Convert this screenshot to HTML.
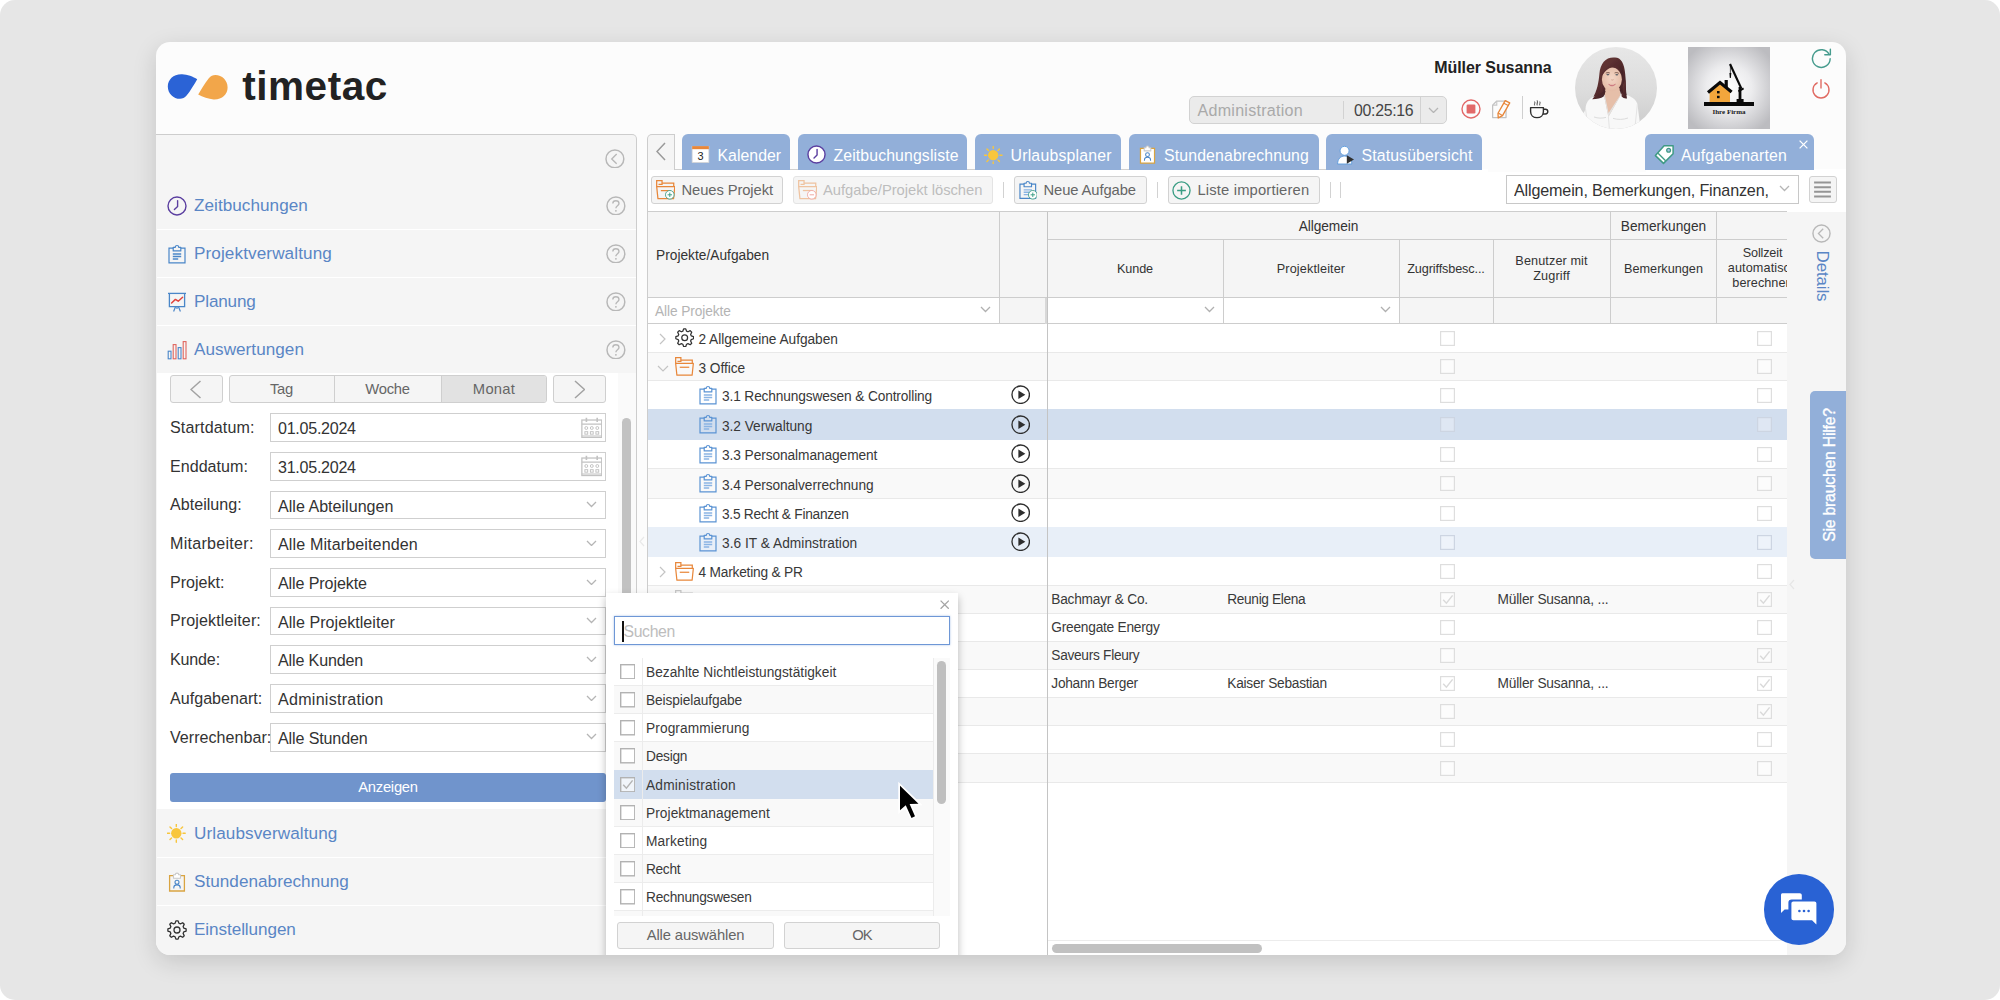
<!DOCTYPE html>
<html lang="de"><head><meta charset="utf-8"><title>TimeTac</title>
<style>
html,body{margin:0;padding:0}
html{background:#fff}
body{width:2000px;height:1000px;overflow:hidden;background:#e6e6e6;border-radius:15px;font-family:"Liberation Sans",sans-serif;position:relative}
#card{position:absolute;left:156px;top:42px;width:1690px;height:913px;border-radius:14px;overflow:hidden;background:#fcfcfc;box-shadow:0 7px 24px rgba(0,0,0,.14)}
#pg{position:absolute;left:-156px;top:-42px;width:2000px;height:1000px}
#pg div,#pg svg{position:absolute;box-sizing:border-box}
.t{white-space:nowrap}
.clip{overflow:hidden}

</style></head>
<body>
<div id="card"><div id="pg">
<svg style="left:164px;top:70px;" width="70" height="34" viewBox="0 0 70 34" fill="none"><path d="M18.2 4.2C23 4.4 29.5 6.6 33.2 9.2C30.4 14 26.6 20.6 22.6 25.6C20.6 28 18.6 28.8 16 28.8C9.4 28.8 3.8 23.4 3.8 16.4C3.8 9.4 9.6 3.8 18.2 4.2Z" fill="#2b63d6"/><path d="M49.6 29.4C44.8 29.2 38.4 27 34.2 24.6C37 19.8 40.8 13.2 44.8 8.2C46.8 5.8 48.8 5 51.4 5C58 5 63.6 10.4 63.6 17.4C63.6 24.4 57.8 29.8 49.6 29.4Z" fill="#f2a64a"/></svg>
<div class="t" style="left:242.2px;top:61.2px;height:50px;line-height:50px;font-size:40.5px;font-weight:700;letter-spacing:0.55px;color:#222">timetac</div>
<div class="t" style="left:1551.5px;top:56.5px;line-height:21px;height:21px;color:#222;white-space:nowrap;font-size:15.98px;font-weight:700;letter-spacing:-0.057px;transform:translateX(-100%);">Müller Susanna</div>
<div style="left:1189px;top:96px;width:258px;height:28px;background:#ebebeb;border:1px solid #d2d2d2;border-radius:5px"></div>
<div style="left:1343px;top:101px;width:1px;height:18px;background:#d2d2d2"></div>
<div style="left:1420px;top:97px;width:1px;height:26px;background:#d2d2d2"></div>
<div class="t" style="left:1197.5px;top:100.4px;line-height:21px;height:21px;color:#a9a9a9;white-space:nowrap;font-size:16.09px;font-weight:400;letter-spacing:0.25px;">Administration</div>
<div class="t" style="left:1354px;top:100.0px;line-height:21px;height:21px;color:#444;white-space:nowrap;font-size:15.82px;font-weight:400;letter-spacing:-0.277px;">00:25:16</div>
<svg style="left:1428.0px;top:106.75px;" width="11" height="6.5" viewBox="0 0 11 6.5" fill="none"><path d="M1 1L5.5 5.5L10 1" stroke="#b5b5b5" stroke-width="1.3"/></svg>
<svg style="left:1460.5px;top:99.0px;" width="20" height="20" viewBox="0 0 20 20" fill="none"><circle cx="10" cy="10" r="9" stroke="#e26969" stroke-width="1.4"/><rect x="5.6" y="5.6" width="8.8" height="8.8" rx="1.2" fill="#e26969"/></svg>
<svg style="left:1490.7px;top:98.5px;" width="20.6" height="20.6" viewBox="0 0 20 20" fill="none"><path d="M5.6 2H14.6V18H1.6V6Z" stroke="#c2c2c2" stroke-width="1.2" stroke-linejoin="round"/><path d="M5.6 2V6H1.6" stroke="#c8c8c8" stroke-width="1.1"/><path d="M13.8 1.6L18.2 3.8L11.2 16.2L7 18.4L6.8 13.8Z" stroke="#e8873a" stroke-width="1.3" stroke-linejoin="round" fill="#fcfcfc"/><path d="M12.4 4.2L16.8 6.4M7 13.6L11 16" stroke="#e8873a" stroke-width="1.1"/></svg>
<div style="left:1522px;top:96px;width:1px;height:23px;background:#cfcfcf"></div>
<svg style="left:1528.5px;top:99.0px;" width="20" height="20" viewBox="0 0 20 20" fill="none"><path d="M1.6 8.6H14.4V12.4C14.4 16.2 11.8 18.6 8 18.6C4.2 18.6 1.6 16.2 1.6 12.4Z" stroke="#2e2e2e" stroke-width="1.4" stroke-linejoin="round"/><path d="M14.4 10.2H16.4C19.6 10.2 19.6 15 16.4 15H13.8" stroke="#2e2e2e" stroke-width="1.4"/><path d="M5.6 6.4C5 5 6.4 4.2 5.6 2.6M8.2 6.4C7.6 4.6 9 3.4 8.2 1.4M10.8 6.4C10.2 5 11.6 4.2 10.8 2.6" stroke="#2e2e2e" stroke-width="0.9"/></svg>
<svg style="left:1575px;top:47px;" width="82" height="82" viewBox="0 0 82 82" fill="none"><defs><clipPath id="avc"><circle cx="41" cy="41" r="41"/></clipPath><linearGradient id="avg" x1="0" y1="0" x2="0" y2="1"><stop offset="0" stop-color="#e7e7e7"/><stop offset="0.55" stop-color="#dcdcdc"/><stop offset="1" stop-color="#cbcbcb"/></linearGradient><radialGradient id="avf" cx="0.5" cy="0.45" r="0.6"><stop offset="0" stop-color="#f3d6c6"/><stop offset="1" stop-color="#e3b9a3"/></radialGradient><linearGradient id="avh" x1="0" y1="0" x2="1" y2="1"><stop offset="0" stop-color="#6b3b38"/><stop offset="0.5" stop-color="#552b2d"/><stop offset="1" stop-color="#3f2025"/></linearGradient><filter id="avb" x="-5%" y="-5%" width="110%" height="110%"><feGaussianBlur stdDeviation="0.45"/></filter></defs><g clip-path="url(#avc)"><rect width="82" height="82" fill="url(#avg)"/><g filter="url(#avb)"><path d="M40 10.6C31 9.8 25.4 16 24.4 27C23.6 35 22.6 43 17.2 52.2C22 52.2 26 51.4 28.6 49.6L33 44H45L46.6 49.6C48 51 50 51.8 52 51.4C50.4 44 51.4 36 50.2 27C49.4 16.6 46 10.6 40 10.6Z" fill="url(#avh)"/><path d="M30.5 41L29 52L33.4 70L45.5 50L44.5 41Z" fill="#e6bfa9"/><path d="M-2 92L10.5 62C11 54 15 50.5 22 48.5L28.6 46.4L33.4 70L46.6 46.6C53 48.4 60.4 50.4 62.4 57L67 92Z" fill="#f8f8f8"/><path d="M28.6 46.4L33.4 70L46.6 46.6L44.4 49.4L33.6 66L30 49Z" fill="#e2e2e2"/><path d="M33.4 70L34.4 82" stroke="#dedede" stroke-width="0.8"/><path d="M19 70C23 71.4 27 71.4 31 70.4M38 71.4C43 72.8 48 72.8 53 71" stroke="#dcdcdc" stroke-width="1" fill="none"/><path d="M10.5 62L13 80M62.4 57L60 80" stroke="#e4e4e4" stroke-width="1" fill="none"/><path d="M24.8 33C24.2 41 22.6 46 17.2 52.2C22 52.2 26 51.4 28.6 49.6L30.6 44.6L27.4 40Z" fill="url(#avh)"/><path d="M46.4 41L46.6 49.6C48 51 50 51.8 52 51.4C50.6 45 51 40 50.4 33Z" fill="url(#avh)"/><ellipse cx="36.9" cy="32.4" rx="10" ry="11.8" fill="url(#avf)"/><path d="M40.5 11.4C33 11.6 27.6 17.6 26.2 31C28.4 25 33 20.6 41.6 18.8C45 20.8 46.6 25 47.2 31.6C49.4 24 48 13.6 40.5 11.4Z" fill="url(#avh)"/><path d="M26.4 29C25.4 35 26.4 42 24 47L28.4 44.6C27 40 26.4 34 26.4 29ZM47.2 30C48 36 47 42 48.6 47.4L45.6 43C46.8 39 47.2 34 47.2 30Z" fill="url(#avh)"/><path d="M30.8 26.2C32 25.4 33.6 25.4 34.8 26M39.6 26C40.8 25.4 42.6 25.4 43.8 26.4" stroke="#6b4a40" stroke-width="0.9" fill="none"/><ellipse cx="32.9" cy="27.6" rx="1.5" ry="0.8" fill="#5c5f66"/><ellipse cx="41.8" cy="27.7" rx="1.5" ry="0.8" fill="#5c5f66"/><path d="M36.2 32.6C36.8 33.2 37.8 33.2 38.6 32.6" stroke="#c99a86" stroke-width="0.8" fill="none"/><path d="M33.6 37.2C35.6 38.6 38.6 38.6 40.6 37C38.6 39.6 35.4 39.6 33.6 37.2Z" fill="#c8707a" stroke="#c8707a" stroke-width="0.5"/></g></g></svg>
<svg style="left:1688px;top:47px;" width="82" height="82" viewBox="0 0 82 82" fill="none"><defs><radialGradient id="lgg" cx="0.5" cy="0.5" r="0.62"><stop offset="0" stop-color="#ffffff"/><stop offset="0.45" stop-color="#ececee"/><stop offset="1" stop-color="#bcbcc0"/></radialGradient></defs><rect width="82" height="82" fill="url(#lgg)"/><rect x="16" y="55" width="50" height="4" fill="#0a0a0a"/><path d="M21.6 55V44.6L32 37L42 44.6V55Z" fill="#f2a63c"/><path d="M20 45.4L32 35.6L43.6 45" stroke="#0a0a0a" stroke-width="3.2" fill="none"/><rect x="36.6" y="33" width="3.2" height="8" fill="#0a0a0a"/><rect x="29" y="44" width="2.6" height="2.4" fill="#0a0a0a"/><rect x="29" y="48.8" width="2.6" height="2.4" fill="#0a0a0a"/><path d="M42 17L53.4 41.6" stroke="#0a0a0a" stroke-width="2.2"/><rect x="50.6" y="40" width="2.8" height="15" fill="#0a0a0a"/><rect x="48.6" y="52" width="7" height="3.4" fill="#0a0a0a"/><path d="M50.4 44.4L55.6 41.4" stroke="#0a0a0a" stroke-width="1.8"/><path d="M42.4 18V26" stroke="#0a0a0a" stroke-width="0.7"/><path d="M41.4 26H43.4L42.8 31L41.8 31Z" fill="#0a0a0a"/><text x="41" y="66.6" text-anchor="middle" font-family="Liberation Serif, serif" font-weight="700" font-size="7" fill="#1a1a1a">Ihre Firma</text></svg>
<svg style="left:1811.0px;top:48.2px;" width="20.6" height="20.6" viewBox="0 0 20 20" fill="none"><path d="M17.6 6.2A8.6 8.6 0 1 0 18.6 10.4" stroke="#479c8e" stroke-width="1.4" stroke-linecap="round"/><path d="M18.8 1.2V6.6H13.4" stroke="#479c8e" stroke-width="1.4" stroke-linecap="round" stroke-linejoin="round"/></svg>
<svg style="left:1810.3px;top:77.5px;" width="22" height="22" viewBox="0 0 22 22" fill="none"><path d="M7.2 4.9A8 8 0 1 0 14.8 4.9" stroke="#e06a62" stroke-width="1.4" stroke-linecap="round"/><path d="M11 1.8V10" stroke="#e06a62" stroke-width="1.4" stroke-linecap="round"/></svg>
<div style="left:156px;top:134px;width:481px;height:830px;background:#f5f5f5;border:1px solid #cdcdcd;border-left:none;border-radius:0 5px 0 0"></div>
<svg style="left:604.8px;top:148.5px;" width="19.8" height="19.8" viewBox="0 0 20 20" fill="none"><circle cx="10" cy="10" r="9" stroke="#b8b8b8" stroke-width="1.5"/><path d="M11.8 5L6.8 10L11.8 15" stroke="#b8b8b8" stroke-width="1.4"/></svg>
<svg style="left:166.6px;top:195.5px;" width="20" height="20" viewBox="0 0 20 20" fill="none"><circle cx="10" cy="10" r="9" stroke="#5b3fa0" stroke-width="1.4" fill="none"/><path d="M10.6 4.6V10.6L7.4 13.6" stroke="#5b3fa0" stroke-width="1.4" stroke-linecap="round" stroke-linejoin="round"/></svg>
<div class="t" style="left:194px;top:193.5px;line-height:23px;height:23px;color:#5a86c5;white-space:nowrap;font-size:17.14px;font-weight:400;letter-spacing:0.04px;">Zeitbuchungen</div>
<svg style="left:606.3px;top:195.5px;" width="19.8" height="19.8" viewBox="0 0 20 20" fill="none"><circle cx="10" cy="10" r="9" stroke="#b8b8b8" stroke-width="1.5"/><path d="M6.9 7.6C6.9 5.8 8.3 4.8 10 4.8C11.8 4.8 13.1 5.9 13.1 7.5C13.1 9.8 10 9.8 10 12.4" stroke="#b8b8b8" stroke-width="1.4"/><circle cx="10" cy="15" r="0.95" fill="#b8b8b8"/></svg>
<svg style="left:166.6px;top:243.5px;" width="20" height="20" viewBox="0 0 20 20" fill="none"><path d="M6.2 4.2H2V18.8H18V4.2H13.8" stroke="#4a86c8" stroke-width="1.2" fill="none"/><path d="M6.2 6.9V3.3H8.3C8.3 0.9 11.7 0.9 11.7 3.3H13.8V6.9Z" stroke="#4a86c8" stroke-width="1.2" fill="none" stroke-linejoin="round"/><path d="M5.8 10H14.2M5.8 12.5H14.2M5.8 15H11.2" stroke="#4a86c8" stroke-width="1.3"/></svg>
<div class="t" style="left:194px;top:241.5px;line-height:23px;height:23px;color:#5a86c5;white-space:nowrap;font-size:17.14px;font-weight:400;letter-spacing:0.105px;">Projektverwaltung</div>
<svg style="left:606.3px;top:243.5px;" width="19.8" height="19.8" viewBox="0 0 20 20" fill="none"><circle cx="10" cy="10" r="9" stroke="#b8b8b8" stroke-width="1.5"/><path d="M6.9 7.6C6.9 5.8 8.3 4.8 10 4.8C11.8 4.8 13.1 5.9 13.1 7.5C13.1 9.8 10 9.8 10 12.4" stroke="#b8b8b8" stroke-width="1.4"/><circle cx="10" cy="15" r="0.95" fill="#b8b8b8"/></svg>
<svg style="left:166.6px;top:291.5px;" width="20" height="20" viewBox="0 0 20 20" fill="none"><path d="M1 1.4H19" stroke="#4a86c8" stroke-width="1.3"/><path d="M2.4 1.4V14.6H17.6V1.4" stroke="#4a86c8" stroke-width="1.3"/><path d="M8.6 14.6L6.6 19.4M11.4 14.6L13.4 19.4M10 14.6V17" stroke="#4a86c8" stroke-width="1.2"/><path d="M4.6 11L8.4 7.4L11.2 9.2L15.6 5.2" stroke="#e0453e" stroke-width="1.5" stroke-linejoin="round" stroke-linecap="round"/></svg>
<div class="t" style="left:194px;top:289.5px;line-height:23px;height:23px;color:#5a86c5;white-space:nowrap;font-size:17.14px;font-weight:400;letter-spacing:-0.174px;">Planung</div>
<svg style="left:606.3px;top:291.5px;" width="19.8" height="19.8" viewBox="0 0 20 20" fill="none"><circle cx="10" cy="10" r="9" stroke="#b8b8b8" stroke-width="1.5"/><path d="M6.9 7.6C6.9 5.8 8.3 4.8 10 4.8C11.8 4.8 13.1 5.9 13.1 7.5C13.1 9.8 10 9.8 10 12.4" stroke="#b8b8b8" stroke-width="1.4"/><circle cx="10" cy="15" r="0.95" fill="#b8b8b8"/></svg>
<svg style="left:166.6px;top:339.5px;" width="20" height="20" viewBox="0 0 20 20" fill="none"><rect x="1.2" y="11.2" width="2.8" height="7.6" stroke="#4a86c8" stroke-width="1.1"/><rect x="6.2" y="4.6" width="2.8" height="14.2" stroke="#e0655e" stroke-width="1.1"/><rect x="11.2" y="7.6" width="2.8" height="11.2" stroke="#4a86c8" stroke-width="1.1"/><rect x="16.2" y="1.6" width="2.8" height="17.2" stroke="#e0655e" stroke-width="1.1"/></svg>
<div class="t" style="left:194px;top:337.5px;line-height:23px;height:23px;color:#5a86c5;white-space:nowrap;font-size:17.14px;font-weight:400;letter-spacing:0.042px;">Auswertungen</div>
<svg style="left:606.3px;top:339.5px;" width="19.8" height="19.8" viewBox="0 0 20 20" fill="none"><circle cx="10" cy="10" r="9" stroke="#b8b8b8" stroke-width="1.5"/><path d="M6.9 7.6C6.9 5.8 8.3 4.8 10 4.8C11.8 4.8 13.1 5.9 13.1 7.5C13.1 9.8 10 9.8 10 12.4" stroke="#b8b8b8" stroke-width="1.4"/><circle cx="10" cy="15" r="0.95" fill="#b8b8b8"/></svg>
<div style="left:157px;top:229px;width:479px;height:1px;background:#fff"></div>
<div style="left:157px;top:277px;width:479px;height:1px;background:#fff"></div>
<div style="left:157px;top:325px;width:479px;height:1px;background:#fff"></div>
<div style="left:157px;top:857px;width:479px;height:1px;background:#fff"></div>
<div style="left:157px;top:905px;width:479px;height:1px;background:#fff"></div>
<div style="left:157px;top:373px;width:460.5px;height:436px;background:#fff"></div>
<div style="left:617.5px;top:373px;width:18px;height:436px;background:#fafafa"></div>
<div style="left:622px;top:418px;width:9.2px;height:200px;background:#c2c2c2;border-radius:5px"></div>
<div style="left:170px;top:375.2px;width:53px;height:28px;background:#f5f5f5;border:1px solid #cfcfcf;border-radius:3px"></div>
<svg style="left:190.25px;top:379.5px;" width="11.5" height="19" viewBox="0 0 11.5 19" fill="none"><path d="M10.5 1L1 9.5L10.5 18" stroke="#a2a2a2" stroke-width="1.5"/></svg>
<div style="left:553px;top:375.2px;width:53px;height:28px;background:#f5f5f5;border:1px solid #cfcfcf;border-radius:3px"></div>
<svg style="left:573.75px;top:379.5px;" width="11.5" height="19" viewBox="0 0 11.5 19" fill="none"><path d="M1 1L10.5 9.5L1 18" stroke="#a2a2a2" stroke-width="1.5"/></svg>
<div style="left:229px;top:375.2px;width:318px;height:28px;background:#f5f5f5;border:1px solid #cfcfcf;border-radius:3px"></div>
<div style="left:441.5px;top:376.2px;width:104.5px;height:26px;background:#e2e2e2;border-radius:0 2px 2px 0"></div>
<div style="left:333.5px;top:376.2px;width:1px;height:26px;background:#cfcfcf"></div>
<div style="left:441px;top:376.2px;width:1px;height:26px;background:#cfcfcf"></div>
<div class="t" style="left:281.5px;top:379.0px;line-height:20px;height:20px;color:#666;white-space:nowrap;font-size:14.77px;font-weight:400;letter-spacing:-0.24px;transform:translateX(-50%);">Tag</div>
<div class="t" style="left:387.5px;top:379.0px;line-height:20px;height:20px;color:#666;white-space:nowrap;font-size:14.77px;font-weight:400;letter-spacing:-0.237px;transform:translateX(-50%);">Woche</div>
<div class="t" style="left:494px;top:379.0px;line-height:20px;height:20px;color:#666;white-space:nowrap;font-size:14.77px;font-weight:400;letter-spacing:0.266px;transform:translateX(-50%);">Monat</div>
<div style="left:270px;top:413.1px;width:336px;height:28.9px;background:#fff;border:1px solid #cfcfcf"></div>
<div class="t" style="left:170px;top:416.9px;line-height:21px;height:21px;color:#333;white-space:nowrap;font-size:16.09px;font-weight:400;letter-spacing:0.142px;">Startdatum:</div>
<div class="t" style="left:278px;top:418.2px;line-height:21px;height:21px;color:#333;white-space:nowrap;font-size:16.09px;font-weight:400;letter-spacing:-0.27px;">01.05.2024</div>
<svg style="left:580.6px;top:416.7px;" width="21.6" height="21.6" viewBox="0 0 20 20" fill="none"><rect x="0.8" y="2.8" width="18.4" height="16.2" stroke="#c2c2c2" stroke-width="1.2"/><path d="M0.8 6.6H19.2M0.8 17.6H19.2" stroke="#c2c2c2" stroke-width="1.1"/><path d="M5 0.8V4.6M15 0.8V4.6" stroke="#c2c2c2" stroke-width="1.5"/><circle cx="4.9" cy="10.2" r="1.35" stroke="#c2c2c2" stroke-width="0.9"/><circle cx="10.0" cy="10.2" r="1.35" stroke="#c2c2c2" stroke-width="0.9"/><circle cx="15.100000000000001" cy="10.2" r="1.35" stroke="#c2c2c2" stroke-width="0.9"/><rect x="3.6" y="13.6" width="2.6" height="2.3" stroke="#c2c2c2" stroke-width="0.9"/><rect x="8.7" y="13.6" width="2.6" height="2.3" stroke="#c2c2c2" stroke-width="0.9"/><rect x="13.8" y="13.6" width="2.6" height="2.3" stroke="#c2c2c2" stroke-width="0.9"/></svg>
<div style="left:270px;top:451.8px;width:336px;height:28.9px;background:#fff;border:1px solid #cfcfcf"></div>
<div class="t" style="left:170px;top:455.6px;line-height:21px;height:21px;color:#333;white-space:nowrap;font-size:16.09px;font-weight:400;letter-spacing:0.012px;">Enddatum:</div>
<div class="t" style="left:278px;top:456.9px;line-height:21px;height:21px;color:#333;white-space:nowrap;font-size:16.09px;font-weight:400;letter-spacing:-0.27px;">31.05.2024</div>
<svg style="left:580.6px;top:455.4px;" width="21.6" height="21.6" viewBox="0 0 20 20" fill="none"><rect x="0.8" y="2.8" width="18.4" height="16.2" stroke="#c2c2c2" stroke-width="1.2"/><path d="M0.8 6.6H19.2M0.8 17.6H19.2" stroke="#c2c2c2" stroke-width="1.1"/><path d="M5 0.8V4.6M15 0.8V4.6" stroke="#c2c2c2" stroke-width="1.5"/><circle cx="4.9" cy="10.2" r="1.35" stroke="#c2c2c2" stroke-width="0.9"/><circle cx="10.0" cy="10.2" r="1.35" stroke="#c2c2c2" stroke-width="0.9"/><circle cx="15.100000000000001" cy="10.2" r="1.35" stroke="#c2c2c2" stroke-width="0.9"/><rect x="3.6" y="13.6" width="2.6" height="2.3" stroke="#c2c2c2" stroke-width="0.9"/><rect x="8.7" y="13.6" width="2.6" height="2.3" stroke="#c2c2c2" stroke-width="0.9"/><rect x="13.8" y="13.6" width="2.6" height="2.3" stroke="#c2c2c2" stroke-width="0.9"/></svg>
<div style="left:270px;top:490.5px;width:336px;height:28.9px;background:#fff;border:1px solid #cfcfcf"></div>
<div class="t" style="left:170px;top:494.3px;line-height:21px;height:21px;color:#333;white-space:nowrap;font-size:16.09px;font-weight:400;letter-spacing:0.016px;">Abteilung:</div>
<div class="t" style="left:278px;top:495.6px;line-height:21px;height:21px;color:#333;white-space:nowrap;font-size:16.09px;font-weight:400;letter-spacing:0.008px;">Alle Abteilungen</div>
<svg style="left:586.0px;top:501.15px;" width="11" height="6.5" viewBox="0 0 11 6.5" fill="none"><path d="M1 1L5.5 5.5L10 1" stroke="#b5b5b5" stroke-width="1.3"/></svg>
<div style="left:270px;top:529.2px;width:336px;height:28.9px;background:#fff;border:1px solid #cfcfcf"></div>
<div class="t" style="left:170px;top:533.0px;line-height:21px;height:21px;color:#333;white-space:nowrap;font-size:16.09px;font-weight:400;letter-spacing:0.273px;">Mitarbeiter:</div>
<div class="t" style="left:278px;top:534.3px;line-height:21px;height:21px;color:#333;white-space:nowrap;font-size:16.09px;font-weight:400;letter-spacing:0.12px;">Alle Mitarbeitenden</div>
<svg style="left:586.0px;top:539.85px;" width="11" height="6.5" viewBox="0 0 11 6.5" fill="none"><path d="M1 1L5.5 5.5L10 1" stroke="#b5b5b5" stroke-width="1.3"/></svg>
<div style="left:270px;top:567.9px;width:336px;height:28.9px;background:#fff;border:1px solid #cfcfcf"></div>
<div class="t" style="left:170px;top:571.7px;line-height:21px;height:21px;color:#333;white-space:nowrap;font-size:16.09px;font-weight:400;letter-spacing:-0.008px;">Projekt:</div>
<div class="t" style="left:278px;top:573.0px;line-height:21px;height:21px;color:#333;white-space:nowrap;font-size:16.09px;font-weight:400;letter-spacing:-0.107px;">Alle Projekte</div>
<svg style="left:586.0px;top:578.55px;" width="11" height="6.5" viewBox="0 0 11 6.5" fill="none"><path d="M1 1L5.5 5.5L10 1" stroke="#b5b5b5" stroke-width="1.3"/></svg>
<div style="left:270px;top:606.6px;width:336px;height:28.9px;background:#fff;border:1px solid #cfcfcf"></div>
<div class="t" style="left:170px;top:610.4px;line-height:21px;height:21px;color:#333;white-space:nowrap;font-size:16.09px;font-weight:400;letter-spacing:0.114px;">Projektleiter:</div>
<div class="t" style="left:278px;top:611.7px;line-height:21px;height:21px;color:#333;white-space:nowrap;font-size:16.09px;font-weight:400;letter-spacing:0.036px;">Alle Projektleiter</div>
<svg style="left:586.0px;top:617.25px;" width="11" height="6.5" viewBox="0 0 11 6.5" fill="none"><path d="M1 1L5.5 5.5L10 1" stroke="#b5b5b5" stroke-width="1.3"/></svg>
<div style="left:270px;top:645.3px;width:336px;height:28.9px;background:#fff;border:1px solid #cfcfcf"></div>
<div class="t" style="left:170px;top:649.1px;line-height:21px;height:21px;color:#333;white-space:nowrap;font-size:16.09px;font-weight:400;letter-spacing:-0.169px;">Kunde:</div>
<div class="t" style="left:278px;top:650.4px;line-height:21px;height:21px;color:#333;white-space:nowrap;font-size:16.09px;font-weight:400;letter-spacing:-0.142px;">Alle Kunden</div>
<svg style="left:586.0px;top:655.95px;" width="11" height="6.5" viewBox="0 0 11 6.5" fill="none"><path d="M1 1L5.5 5.5L10 1" stroke="#b5b5b5" stroke-width="1.3"/></svg>
<div style="left:270px;top:684.0px;width:336px;height:28.9px;background:#fff;border:1px solid #cfcfcf"></div>
<div class="t" style="left:170px;top:687.8px;line-height:21px;height:21px;color:#333;white-space:nowrap;font-size:16.09px;font-weight:400;letter-spacing:0.017px;">Aufgabenart:</div>
<div class="t" style="left:278px;top:689.1px;line-height:21px;height:21px;color:#333;white-space:nowrap;font-size:16.09px;font-weight:400;letter-spacing:0.25px;">Administration</div>
<svg style="left:586.0px;top:694.65px;" width="11" height="6.5" viewBox="0 0 11 6.5" fill="none"><path d="M1 1L5.5 5.5L10 1" stroke="#b5b5b5" stroke-width="1.3"/></svg>
<div style="left:270px;top:722.7px;width:336px;height:28.9px;background:#fff;border:1px solid #cfcfcf"></div>
<div class="t" style="left:170px;top:726.5px;line-height:21px;height:21px;color:#333;white-space:nowrap;font-size:16.09px;font-weight:400;letter-spacing:0.024px;">Verrechenbar:</div>
<div class="t" style="left:278px;top:727.8px;line-height:21px;height:21px;color:#333;white-space:nowrap;font-size:16.09px;font-weight:400;letter-spacing:-0.13px;">Alle Stunden</div>
<svg style="left:586.0px;top:733.35px;" width="11" height="6.5" viewBox="0 0 11 6.5" fill="none"><path d="M1 1L5.5 5.5L10 1" stroke="#b5b5b5" stroke-width="1.3"/></svg>
<div style="left:170px;top:773px;width:436px;height:28.5px;background:#7094cc;border-radius:3px"></div>
<div class="t" style="left:388px;top:777.0px;line-height:20px;height:20px;color:#fff;white-space:nowrap;font-size:14.77px;font-weight:400;letter-spacing:-0.266px;transform:translateX(-50%);">Anzeigen</div>
<svg style="left:167.3px;top:824.2px;" width="18.6" height="18.6" viewBox="0 0 20 20" fill="none"><circle cx="10" cy="10" r="5.6" fill="#f8c63d"/><path d="M17.20 10.00L19.60 10.00M15.09 15.09L16.79 16.79M10.00 17.20L10.00 19.60M4.91 15.09L3.21 16.79M2.80 10.00L0.40 10.00M4.91 4.91L3.21 3.21M10.00 2.80L10.00 0.40M15.09 4.91L16.79 3.21" stroke="#f8c63d" stroke-width="1.5" stroke-linecap="round"/></svg>
<div class="t" style="left:194px;top:821.5px;line-height:23px;height:23px;color:#5a86c5;white-space:nowrap;font-size:17.14px;font-weight:400;letter-spacing:0.095px;">Urlaubsverwaltung</div>
<svg style="left:166.6px;top:871.5px;" width="20" height="20" viewBox="0 0 20 20" fill="none"><path d="M6.5 3.6H2.6V19H17.4V3.6H13.5" stroke="#d9a441" stroke-width="1.3" fill="none"/><path d="M6.5 6.2V2.8H8.3C8.3 0.6 11.7 0.6 11.7 2.8H13.5V6.2Z" stroke="#c9c9c9" stroke-width="1.1" fill="#fff" stroke-linejoin="round"/><circle cx="10" cy="10.2" r="2" stroke="#4a86c8" stroke-width="1.1"/><path d="M6.8 16.6V15.4C6.8 13.8 8.2 12.9 10 12.9C11.8 12.9 13.2 13.8 13.2 15.4V16.6" stroke="#4a86c8" stroke-width="1.1"/></svg>
<div class="t" style="left:194px;top:869.5px;line-height:23px;height:23px;color:#5a86c5;white-space:nowrap;font-size:17.14px;font-weight:400;letter-spacing:0.036px;">Stundenabrechnung</div>
<svg style="left:166.6px;top:919.5px;" width="20" height="20" viewBox="0 0 20 20" fill="none"><path d="M16.73 8.07L19.13 8.90L19.13 11.10L16.73 11.93L16.12 13.39L17.24 15.68L15.68 17.24L13.39 16.12L11.93 16.73L11.10 19.13L8.90 19.13L8.07 16.73L6.61 16.12L4.32 17.24L2.76 15.68L3.88 13.39L3.27 11.93L0.87 11.10L0.87 8.90L3.27 8.07L3.88 6.61L2.76 4.32L4.32 2.76L6.61 3.88L8.07 3.27L8.90 0.87L11.10 0.87L11.93 3.27L13.39 3.88L15.68 2.76L17.24 4.32L16.12 6.61Z" stroke="#333" stroke-width="1.3" stroke-linejoin="round"/><circle cx="10" cy="10" r="3" stroke="#333" stroke-width="1.3"/></svg>
<div class="t" style="left:194px;top:917.5px;line-height:23px;height:23px;color:#5a86c5;white-space:nowrap;font-size:17.14px;font-weight:400;letter-spacing:-0.078px;">Einstellungen</div>
<div style="left:647px;top:169px;width:1210px;height:43px;background:#fff;border-left:1px solid #cdcdcd"></div>
<div style="left:647px;top:169px;width:835px;height:1px;background:#d0d0d0"></div>
<div style="left:1488px;top:169px;width:158px;height:3px;background:#fcfcfc"></div>
<div style="left:647px;top:134px;width:28px;height:36px;background:#f5f5f5;border:1px solid #cdcdcd;border-bottom:none;border-radius:5px 0 0 0"></div>
<svg style="left:655.5px;top:142.0px;" width="10" height="19" viewBox="0 0 10 19" fill="none"><path d="M9 1L1 9.5L9 18" stroke="#9a9a9a" stroke-width="1.5"/></svg>
<div style="left:682px;top:134px;width:108px;height:35.6px;background:#92afd9;border-radius:6px 6px 0 0"></div>
<svg style="left:690.5px;top:145.2px;" width="19" height="19" viewBox="0 0 20 20" fill="none"><rect x="1.2" y="1.6" width="17.6" height="16.8" fill="#fff" stroke="#d5d5d5" stroke-width="0.8"/><rect x="1.2" y="1.2" width="17.6" height="3.2" fill="#e8873a"/><text x="10" y="15.6" text-anchor="middle" font-family="Liberation Sans, sans-serif" font-size="11.5" fill="#222">3</text></svg>
<div class="t" style="left:717.5px;top:144.5px;line-height:21px;height:21px;color:#fff;white-space:nowrap;font-size:15.82px;font-weight:400;letter-spacing:0.042px;">Kalender</div>
<div style="left:798px;top:134px;width:169px;height:35.6px;background:#92afd9;border-radius:6px 6px 0 0"></div>
<svg style="left:807.0px;top:145.2px;" width="19" height="19" viewBox="0 0 20 20" fill="none"><circle cx="10" cy="10" r="9" stroke="#5b3fa0" stroke-width="1.5" fill="#fff"/><path d="M10.6 4.6V10.6L7.4 13.6" stroke="#5b3fa0" stroke-width="1.5" stroke-linecap="round" stroke-linejoin="round"/></svg>
<div class="t" style="left:833.5px;top:144.5px;line-height:21px;height:21px;color:#fff;white-space:nowrap;font-size:15.82px;font-weight:400;letter-spacing:0.122px;">Zeitbuchungsliste</div>
<div style="left:975px;top:134px;width:146px;height:35.6px;background:#92afd9;border-radius:6px 6px 0 0"></div>
<svg style="left:984.3px;top:145.5px;" width="18.4" height="18.4" viewBox="0 0 20 20" fill="none"><circle cx="10" cy="10" r="5.6" fill="#f8c63d"/><path d="M17.20 10.00L19.60 10.00M15.09 15.09L16.79 16.79M10.00 17.20L10.00 19.60M4.91 15.09L3.21 16.79M2.80 10.00L0.40 10.00M4.91 4.91L3.21 3.21M10.00 2.80L10.00 0.40M15.09 4.91L16.79 3.21" stroke="#f8c63d" stroke-width="1.5" stroke-linecap="round"/></svg>
<div class="t" style="left:1010.5px;top:144.5px;line-height:21px;height:21px;color:#fff;white-space:nowrap;font-size:15.82px;font-weight:400;letter-spacing:0.221px;">Urlaubsplaner</div>
<div style="left:1129px;top:134px;width:190px;height:35.6px;background:#92afd9;border-radius:6px 6px 0 0"></div>
<svg style="left:1138.0px;top:145.2px;" width="19" height="19" viewBox="0 0 20 20" fill="none"><path d="M6.5 3.6H2.6V19H17.4V3.6H13.5" stroke="#d9a441" stroke-width="1.3" fill="#fff"/><path d="M6.5 6.2V2.8H8.3C8.3 0.6 11.7 0.6 11.7 2.8H13.5V6.2Z" stroke="#c9c9c9" stroke-width="1.1" fill="#fff" stroke-linejoin="round"/><circle cx="10" cy="10.2" r="2" stroke="#4a86c8" stroke-width="1.1"/><path d="M6.8 16.6V15.4C6.8 13.8 8.2 12.9 10 12.9C11.8 12.9 13.2 13.8 13.2 15.4V16.6" stroke="#4a86c8" stroke-width="1.1"/></svg>
<div class="t" style="left:1164px;top:144.5px;line-height:21px;height:21px;color:#fff;white-space:nowrap;font-size:15.82px;font-weight:400;letter-spacing:0.151px;">Stundenabrechnung</div>
<div style="left:1326px;top:134px;width:155.5px;height:35.6px;background:#92afd9;border-radius:6px 6px 0 0"></div>
<svg style="left:1330px;top:140px;" width="30" height="30" viewBox="0 0 30 30" fill="none"><path d="M7.6 24C7.6 19 10.6 16 14.7 16C18.8 16 21.8 19 21.8 24Z" fill="#fff" stroke="#5b9bdc" stroke-width="0.9"/><circle cx="14.55" cy="10.8" r="4.5" fill="#fff" stroke="#5b9bdc" stroke-width="0.9"/><path d="M16.8 15.3V23.7L24 19.5Z" fill="#303030"/></svg>
<div class="t" style="left:1361.5px;top:144.5px;line-height:21px;height:21px;color:#fff;white-space:nowrap;font-size:15.82px;font-weight:400;letter-spacing:0.134px;">Statusübersicht</div>
<div style="left:1645px;top:134px;width:169px;height:35.6px;background:#92afd9;border-radius:6px 6px 0 0"></div>
<svg style="left:1650.0px;top:140.0px;" width="30" height="30" viewBox="0 0 30 30" fill="none"><path d="M14.1 5.7H23.1V13.8L13.5 23.4L5.4 15.6Z" fill="#fff" stroke="#3f9a85" stroke-width="1.5" stroke-linejoin="round"/><path d="M8.1 13.2L15.6 20.7" stroke="#3f9a85" stroke-width="1.4"/><circle cx="18.6" cy="10.2" r="1.9" stroke="#3f9a85" stroke-width="1.3" fill="#a9c2e4"/></svg>
<div class="t" style="left:1681px;top:144.5px;line-height:21px;height:21px;color:#fff;white-space:nowrap;font-size:15.82px;font-weight:400;letter-spacing:0.174px;">Aufgabenarten</div>
<svg style="left:1798.5px;top:140.0px;" width="9" height="9" viewBox="0 0 9 9" fill="none"><path d="M0.6 0.6L8.4 8.4M8.4 0.6L0.6 8.4" stroke="#fff" stroke-width="1.3"/></svg>
<div style="left:651px;top:176px;width:132px;height:28px;background:#f5f5f5;border:1px solid #d2d2d2;border-radius:3px"></div>
<svg style="left:655.65px;top:180.25px;" width="19.5" height="19.5" viewBox="0 0 20 20" fill="none"><g opacity="1"><path d="M0.7 6.8V0.7H6.2V4.6H2.6" stroke="#e8873a" stroke-width="1.3"/><path d="M6.2 3.2H18.2V6.8" stroke="#e8873a" stroke-width="1.3"/><path d="M0.7 6.8H19.3L18 19.2H2Z" stroke="#e8873a" stroke-width="1.3" stroke-linejoin="round"/><path d="M5 10.8H15" stroke="#e8873a" stroke-width="1.3"/></g></svg>
<svg style="left:665.2px;top:190.0px;" width="9.6" height="9.6" viewBox="0 0 20 20" fill="none"><circle cx="10" cy="10" r="9" stroke="#3a9d84" stroke-width="1.8" fill="#fff"/><path d="M10 5.4V14.6M5.4 10H14.6" stroke="#3a9d84" stroke-width="2.0"/></svg>
<div class="t" style="left:681.5px;top:180.0px;line-height:20px;height:20px;color:#666;white-space:nowrap;font-size:14.77px;font-weight:400;letter-spacing:-0.099px;">Neues Projekt</div>
<div style="left:793px;top:176px;width:199.5px;height:28px;background:#f5f5f5;border:1px solid #e4e4e4;border-radius:3px"></div>
<svg style="left:797.65px;top:180.25px;" width="19.5" height="19.5" viewBox="0 0 20 20" fill="none"><g opacity="0.45"><path d="M0.7 6.8V0.7H6.2V4.6H2.6" stroke="#e8873a" stroke-width="1.3"/><path d="M6.2 3.2H18.2V6.8" stroke="#e8873a" stroke-width="1.3"/><path d="M0.7 6.8H19.3L18 19.2H2Z" stroke="#e8873a" stroke-width="1.3" stroke-linejoin="round"/><path d="M5 10.8H15" stroke="#e8873a" stroke-width="1.3"/></g></svg>
<svg style="left:807.2px;top:190.0px;" width="9.6" height="9.6" viewBox="0 0 20 20" fill="none"><circle cx="10" cy="10" r="9" stroke="#f0a5a0" stroke-width="1.8" fill="#fff"/><path d="M5.4 10H14.6" stroke="#f0a5a0" stroke-width="2.0"/></svg>
<div class="t" style="left:823px;top:180.0px;line-height:20px;height:20px;color:#bdbdbd;white-space:nowrap;font-size:14.77px;font-weight:400;letter-spacing:-0.029px;">Aufgabe/Projekt löschen</div>
<div style="left:1003.0px;top:182px;width:1px;height:15.5px;background:#d2d2d2"></div>
<div style="left:1014px;top:176px;width:133px;height:28px;background:#f5f5f5;border:1px solid #d2d2d2;border-radius:3px"></div>
<svg style="left:1018.2px;top:180.0px;" width="19.6" height="19.6" viewBox="0 0 20 20" fill="none"><path d="M6.2 4.2H2V18.8H18V4.2H13.8" stroke="#4a86c8" stroke-width="1.2" fill="none"/><path d="M6.2 6.9V3.3H8.3C8.3 0.9 11.7 0.9 11.7 3.3H13.8V6.9Z" stroke="#4a86c8" stroke-width="1.2" fill="none" stroke-linejoin="round"/><path d="M5.8 10H14.2M5.8 12.5H14.2M5.8 15H11.2" stroke="#8ab4e4" stroke-width="1.3"/></svg>
<svg style="left:1027.8px;top:190.0px;" width="9.6" height="9.6" viewBox="0 0 20 20" fill="none"><circle cx="10" cy="10" r="9" stroke="#3a9d84" stroke-width="1.8" fill="#fff"/><path d="M10 5.4V14.6M5.4 10H14.6" stroke="#3a9d84" stroke-width="2.0"/></svg>
<div class="t" style="left:1043.5px;top:180.0px;line-height:20px;height:20px;color:#666;white-space:nowrap;font-size:14.77px;font-weight:400;letter-spacing:-0.096px;">Neue Aufgabe</div>
<div style="left:1157.0px;top:182px;width:1px;height:15.5px;background:#d2d2d2"></div>
<div style="left:1168px;top:176px;width:152px;height:28px;background:#f5f5f5;border:1px solid #d2d2d2;border-radius:3px"></div>
<svg style="left:1172.0px;top:180.5px;" width="19" height="19" viewBox="0 0 20 20" fill="none"><circle cx="10" cy="10" r="9" stroke="#3a9d84" stroke-width="1.4" fill="none"/><path d="M10 5.4V14.6M5.4 10H14.6" stroke="#3a9d84" stroke-width="1.5999999999999999"/></svg>
<div class="t" style="left:1197.5px;top:180.0px;line-height:20px;height:20px;color:#666;white-space:nowrap;font-size:14.77px;font-weight:400;letter-spacing:0.153px;">Liste importieren</div>
<div style="left:1329.5px;top:182px;width:1px;height:15.5px;background:#d2d2d2"></div>
<div style="left:1339.5px;top:182px;width:1px;height:15.5px;background:#d2d2d2"></div>
<div style="left:1506px;top:175px;width:293px;height:29px;background:#fff;border:1px solid #c8c8c8"></div>
<div style="left:1514px;top:176px;width:253.5px;height:27px;overflow:hidden"><div class="t" style="left:0px;top:4.0px;line-height:21px;height:21px;color:#333;white-space:nowrap;font-size:16.14px;font-weight:400;letter-spacing:-0.155px;">Allgemein, Bemerkungen, Finanzen,</div></div>
<svg style="left:1778.5px;top:185.25px;" width="11" height="6.5" viewBox="0 0 11 6.5" fill="none"><path d="M1 1L5.5 5.5L10 1" stroke="#b5b5b5" stroke-width="1.3"/></svg>
<div style="left:1809px;top:176px;width:28px;height:27px;background:#f5f5f5;border:1px solid #d2d2d2;border-radius:3px"></div>
<svg style="left:1812.0px;top:179.0px;" width="21" height="21" viewBox="0 0 20 20" fill="none"><path d="M2 3.4H18M2 7.8H18M2 12.2H18M2 16.6H18" stroke="#959595" stroke-width="1.9"/></svg>
<div style="left:647px;top:212px;width:1140px;height:111px;background:#f5f5f5;border-left:1px solid #cdcdcd"></div>
<div style="left:647px;top:324px;width:1140px;height:631px;background:#fff;border-left:1px solid #cdcdcd"></div>
<div style="left:647px;top:211px;width:1140px;height:1px;background:#cdcdcd"></div>
<div style="left:1047px;top:239px;width:740px;height:1px;background:#cdcdcd"></div>
<div style="left:647px;top:297px;width:1140px;height:1px;background:#cdcdcd"></div>
<div style="left:647px;top:323px;width:1140px;height:1px;background:#cdcdcd"></div>
<div style="left:999px;top:212px;width:1px;height:111px;background:#cdcdcd"></div>
<div style="left:1610px;top:212px;width:1px;height:111px;background:#cdcdcd"></div>
<div style="left:1716px;top:212px;width:1px;height:111px;background:#cdcdcd"></div>
<div style="left:1223px;top:240px;width:1px;height:83px;background:#cdcdcd"></div>
<div style="left:1399px;top:240px;width:1px;height:83px;background:#cdcdcd"></div>
<div style="left:1493px;top:240px;width:1px;height:83px;background:#cdcdcd"></div>
<div style="left:648px;top:298px;width:351px;height:25px;background:#fff"></div>
<div style="left:1048px;top:298px;width:175px;height:25px;background:#fff"></div>
<div style="left:1224px;top:298px;width:175px;height:25px;background:#fff"></div>
<div style="left:1045px;top:298px;width:2px;height:26px;background:#d8d8d8"></div>
<div class="t" style="left:655px;top:302.8px;line-height:18px;height:18px;color:#b4b4b4;white-space:nowrap;font-size:13.71px;font-weight:400;letter-spacing:-0.09px;">Alle Projekte</div>
<svg style="left:980.0px;top:306.25px;" width="11" height="6.5" viewBox="0 0 11 6.5" fill="none"><path d="M1 1L5.5 5.5L10 1" stroke="#b0b0b0" stroke-width="1.3"/></svg>
<svg style="left:1203.5px;top:306.25px;" width="11" height="6.5" viewBox="0 0 11 6.5" fill="none"><path d="M1 1L5.5 5.5L10 1" stroke="#b0b0b0" stroke-width="1.3"/></svg>
<svg style="left:1379.5px;top:306.25px;" width="11" height="6.5" viewBox="0 0 11 6.5" fill="none"><path d="M1 1L5.5 5.5L10 1" stroke="#b0b0b0" stroke-width="1.3"/></svg>
<div class="t" style="left:656px;top:246.8px;line-height:18px;height:18px;color:#333;white-space:nowrap;font-size:13.71px;font-weight:400;letter-spacing:0.023px;">Projekte/Aufgaben</div>
<div class="t" style="left:1328.5px;top:217.5px;line-height:18px;height:18px;color:#333;white-space:nowrap;font-size:13.71px;font-weight:400;letter-spacing:-0.05px;transform:translateX(-50%);">Allgemein</div>
<div class="t" style="left:1663.5px;top:217.5px;line-height:18px;height:18px;color:#333;white-space:nowrap;font-size:13.71px;font-weight:400;letter-spacing:0.011px;transform:translateX(-50%);">Bemerkungen</div>
<div class="t" style="left:1135px;top:260.8px;line-height:17px;height:17px;color:#333;white-space:nowrap;font-size:12.66px;font-weight:400;letter-spacing:-0.091px;transform:translateX(-50%);">Kunde</div>
<div class="t" style="left:1311px;top:260.8px;line-height:17px;height:17px;color:#333;white-space:nowrap;font-size:12.66px;font-weight:400;letter-spacing:0.123px;transform:translateX(-50%);">Projektleiter</div>
<div class="t" style="left:1446px;top:260.9px;line-height:17px;height:17px;color:#333;white-space:nowrap;font-size:12.66px;font-weight:400;letter-spacing:-0.118px;transform:translateX(-50%);">Zugriffsbesc...</div>
<div class="t" style="left:1551.5px;top:252.5px;line-height:17px;height:17px;color:#333;white-space:nowrap;font-size:12.66px;font-weight:400;letter-spacing:0.104px;transform:translateX(-50%);">Benutzer mit</div>
<div class="t" style="left:1551.5px;top:267.5px;line-height:17px;height:17px;color:#333;white-space:nowrap;font-size:12.66px;font-weight:400;letter-spacing:0.158px;transform:translateX(-50%);">Zugriff</div>
<div class="t" style="left:1663.5px;top:260.9px;line-height:17px;height:17px;color:#333;white-space:nowrap;font-size:12.66px;font-weight:400;letter-spacing:0.007px;transform:translateX(-50%);">Bemerkungen</div>
<div style="left:1717px;top:240px;width:70px;height:57px;overflow:hidden"><div class="t" style="left:45.5px;top:4.5px;line-height:17px;height:17px;color:#333;white-space:nowrap;font-size:12.66px;font-weight:400;letter-spacing:-0.16px;transform:translateX(-50%);">Sollzeit</div><div class="t" style="left:45.5px;top:20.0px;line-height:17px;height:17px;color:#333;white-space:nowrap;font-size:12.66px;font-weight:400;letter-spacing:0.108px;transform:translateX(-50%);">automatisch</div><div class="t" style="left:45.5px;top:35.0px;line-height:17px;height:17px;color:#333;white-space:nowrap;font-size:12.66px;font-weight:400;letter-spacing:0.052px;transform:translateX(-50%);">berechnen</div></div>
<div style="left:648px;top:352px;width:1139px;height:1px;background:#e9e9e9"></div>
<svg style="left:659.0px;top:332.5px;" width="7" height="12" viewBox="0 0 7 12" fill="none"><path d="M1 1L6 6.0L1 11" stroke="#c4c4c4" stroke-width="1.2"/></svg>
<svg style="left:674.6px;top:328.0px;" width="19.4" height="19.4" viewBox="0 0 20 20" fill="none"><path d="M16.73 8.07L19.13 8.90L19.13 11.10L16.73 11.93L16.12 13.39L17.24 15.68L15.68 17.24L13.39 16.12L11.93 16.73L11.10 19.13L8.90 19.13L8.07 16.73L6.61 16.12L4.32 17.24L2.76 15.68L3.88 13.39L3.27 11.93L0.87 11.10L0.87 8.90L3.27 8.07L3.88 6.61L2.76 4.32L4.32 2.76L6.61 3.88L8.07 3.27L8.90 0.87L11.10 0.87L11.93 3.27L13.39 3.88L15.68 2.76L17.24 4.32L16.12 6.61Z" stroke="#333" stroke-width="1.3" stroke-linejoin="round"/><circle cx="10" cy="10" r="3" stroke="#333" stroke-width="1.3"/></svg>
<div class="t" style="left:698.5px;top:331.0px;line-height:18px;height:18px;color:#383838;white-space:nowrap;font-size:13.71px;font-weight:400;letter-spacing:-0.043px;">2 Allgemeine Aufgaben</div>
<svg style="left:1439.5px;top:330.5px;" width="15" height="15" viewBox="0 0 15 15" fill="none"><rect x="0.6" y="0.6" width="13.8" height="13.8" fill="#fff" stroke="#dedede" stroke-width="1.2"/></svg>
<svg style="left:1756.5px;top:330.5px;" width="15" height="15" viewBox="0 0 15 15" fill="none"><rect x="0.6" y="0.6" width="13.8" height="13.8" fill="#fff" stroke="#dedede" stroke-width="1.2"/></svg>
<div style="left:648px;top:353px;width:1139px;height:27px;background:#f9f9f9"></div>
<div style="left:648px;top:380px;width:1139px;height:1px;background:#e9e9e9"></div>
<svg style="left:656.5px;top:364.5px;" width="12" height="7" viewBox="0 0 12 7" fill="none"><path d="M1 1L6.0 6L11 1" stroke="#c4c4c4" stroke-width="1.2"/></svg>
<svg style="left:674.8px;top:357.0px;" width="19" height="19" viewBox="0 0 20 20" fill="none"><g opacity="1"><path d="M0.7 6.8V0.7H6.2V4.6H2.6" stroke="#e8873a" stroke-width="1.3"/><path d="M6.2 3.2H18.2V6.8" stroke="#e8873a" stroke-width="1.3"/><path d="M0.7 6.8H19.3L18 19.2H2Z" stroke="#e8873a" stroke-width="1.3" stroke-linejoin="round"/><path d="M5 10.8H15" stroke="#e8873a" stroke-width="1.3"/></g></svg>
<div class="t" style="left:698.5px;top:359.5px;line-height:18px;height:18px;color:#383838;white-space:nowrap;font-size:13.71px;font-weight:400;letter-spacing:-0.062px;">3 Office</div>
<svg style="left:1439.5px;top:359.0px;" width="15" height="15" viewBox="0 0 15 15" fill="none"><rect x="0.6" y="0.6" width="13.8" height="13.8" fill="#fcfcfc" stroke="#dedede" stroke-width="1.2"/></svg>
<svg style="left:1756.5px;top:359.0px;" width="15" height="15" viewBox="0 0 15 15" fill="none"><rect x="0.6" y="0.6" width="13.8" height="13.8" fill="#fcfcfc" stroke="#dedede" stroke-width="1.2"/></svg>
<div style="left:648px;top:409px;width:1139px;height:1px;background:#e9e9e9"></div>
<svg style="left:697.5px;top:384.8px;" width="20" height="20" viewBox="0 0 20 20" fill="none"><path d="M6.2 4.2H2V18.8H18V4.2H13.8" stroke="#5b93d3" stroke-width="1.2" fill="none"/><path d="M6.2 6.9V3.3H8.3C8.3 0.9 11.7 0.9 11.7 3.3H13.8V6.9Z" stroke="#5b93d3" stroke-width="1.2" fill="none" stroke-linejoin="round"/><path d="M5.8 10H14.2M5.8 12.5H14.2M5.8 15H11.2" stroke="#8ab4e4" stroke-width="1.3"/></svg>
<div class="t" style="left:722px;top:388.0px;line-height:18px;height:18px;color:#383838;white-space:nowrap;font-size:13.71px;font-weight:400;letter-spacing:-0.125px;">3.1 Rechnungswesen &amp; Controlling</div>
<svg style="left:1010.6px;top:385.1px;" width="19.4" height="19.4" viewBox="0 0 20 20" fill="none"><circle cx="10" cy="10" r="9" stroke="#2e2e2e" stroke-width="1.4"/><path d="M7.6 5.6V14.4L14.8 10Z" fill="#2e2e2e"/></svg>
<svg style="left:1439.5px;top:387.5px;" width="15" height="15" viewBox="0 0 15 15" fill="none"><rect x="0.6" y="0.6" width="13.8" height="13.8" fill="#fff" stroke="#dedede" stroke-width="1.2"/></svg>
<svg style="left:1756.5px;top:387.5px;" width="15" height="15" viewBox="0 0 15 15" fill="none"><rect x="0.6" y="0.6" width="13.8" height="13.8" fill="#fff" stroke="#dedede" stroke-width="1.2"/></svg>
<div style="left:648px;top:409px;width:1139px;height:31px;background:#d2deee"></div>
<svg style="left:697.5px;top:414.3px;" width="20" height="20" viewBox="0 0 20 20" fill="none"><path d="M6.2 4.2H2V18.8H18V4.2H13.8" stroke="#5b93d3" stroke-width="1.2" fill="none"/><path d="M6.2 6.9V3.3H8.3C8.3 0.9 11.7 0.9 11.7 3.3H13.8V6.9Z" stroke="#5b93d3" stroke-width="1.2" fill="none" stroke-linejoin="round"/><path d="M5.8 10H14.2M5.8 12.5H14.2M5.8 15H11.2" stroke="#8ab4e4" stroke-width="1.3"/></svg>
<div class="t" style="left:722px;top:417.5px;line-height:18px;height:18px;color:#383838;white-space:nowrap;font-size:13.71px;font-weight:400;letter-spacing:-0.029px;">3.2 Verwaltung</div>
<svg style="left:1010.6px;top:414.6px;" width="19.4" height="19.4" viewBox="0 0 20 20" fill="none"><circle cx="10" cy="10" r="9" stroke="#2e2e2e" stroke-width="1.4"/><path d="M7.6 5.6V14.4L14.8 10Z" fill="#2e2e2e"/></svg>
<svg style="left:1439.5px;top:417.0px;" width="15" height="15" viewBox="0 0 15 15" fill="none"><rect x="0.6" y="0.6" width="13.8" height="13.8" fill="#dfe7f3" stroke="#cdd5e2" stroke-width="1.2"/></svg>
<svg style="left:1756.5px;top:417.0px;" width="15" height="15" viewBox="0 0 15 15" fill="none"><rect x="0.6" y="0.6" width="13.8" height="13.8" fill="#dfe7f3" stroke="#cdd5e2" stroke-width="1.2"/></svg>
<div style="left:648px;top:468px;width:1139px;height:1px;background:#e9e9e9"></div>
<svg style="left:697.5px;top:443.8px;" width="20" height="20" viewBox="0 0 20 20" fill="none"><path d="M6.2 4.2H2V18.8H18V4.2H13.8" stroke="#5b93d3" stroke-width="1.2" fill="none"/><path d="M6.2 6.9V3.3H8.3C8.3 0.9 11.7 0.9 11.7 3.3H13.8V6.9Z" stroke="#5b93d3" stroke-width="1.2" fill="none" stroke-linejoin="round"/><path d="M5.8 10H14.2M5.8 12.5H14.2M5.8 15H11.2" stroke="#8ab4e4" stroke-width="1.3"/></svg>
<div class="t" style="left:722px;top:447.0px;line-height:18px;height:18px;color:#383838;white-space:nowrap;font-size:13.71px;font-weight:400;letter-spacing:-0.072px;">3.3 Personalmanagement</div>
<svg style="left:1010.6px;top:444.1px;" width="19.4" height="19.4" viewBox="0 0 20 20" fill="none"><circle cx="10" cy="10" r="9" stroke="#2e2e2e" stroke-width="1.4"/><path d="M7.6 5.6V14.4L14.8 10Z" fill="#2e2e2e"/></svg>
<svg style="left:1439.5px;top:446.5px;" width="15" height="15" viewBox="0 0 15 15" fill="none"><rect x="0.6" y="0.6" width="13.8" height="13.8" fill="#fff" stroke="#dedede" stroke-width="1.2"/></svg>
<svg style="left:1756.5px;top:446.5px;" width="15" height="15" viewBox="0 0 15 15" fill="none"><rect x="0.6" y="0.6" width="13.8" height="13.8" fill="#fff" stroke="#dedede" stroke-width="1.2"/></svg>
<div style="left:648px;top:469px;width:1139px;height:29px;background:#f9f9f9"></div>
<div style="left:648px;top:498px;width:1139px;height:1px;background:#e9e9e9"></div>
<svg style="left:697.5px;top:473.3px;" width="20" height="20" viewBox="0 0 20 20" fill="none"><path d="M6.2 4.2H2V18.8H18V4.2H13.8" stroke="#5b93d3" stroke-width="1.2" fill="none"/><path d="M6.2 6.9V3.3H8.3C8.3 0.9 11.7 0.9 11.7 3.3H13.8V6.9Z" stroke="#5b93d3" stroke-width="1.2" fill="none" stroke-linejoin="round"/><path d="M5.8 10H14.2M5.8 12.5H14.2M5.8 15H11.2" stroke="#8ab4e4" stroke-width="1.3"/></svg>
<div class="t" style="left:722px;top:476.5px;line-height:18px;height:18px;color:#383838;white-space:nowrap;font-size:13.71px;font-weight:400;letter-spacing:-0.071px;">3.4 Personalverrechnung</div>
<svg style="left:1010.6px;top:473.6px;" width="19.4" height="19.4" viewBox="0 0 20 20" fill="none"><circle cx="10" cy="10" r="9" stroke="#2e2e2e" stroke-width="1.4"/><path d="M7.6 5.6V14.4L14.8 10Z" fill="#2e2e2e"/></svg>
<svg style="left:1439.5px;top:476.0px;" width="15" height="15" viewBox="0 0 15 15" fill="none"><rect x="0.6" y="0.6" width="13.8" height="13.8" fill="#fcfcfc" stroke="#dedede" stroke-width="1.2"/></svg>
<svg style="left:1756.5px;top:476.0px;" width="15" height="15" viewBox="0 0 15 15" fill="none"><rect x="0.6" y="0.6" width="13.8" height="13.8" fill="#fcfcfc" stroke="#dedede" stroke-width="1.2"/></svg>
<div style="left:648px;top:527px;width:1139px;height:1px;background:#e9e9e9"></div>
<svg style="left:697.5px;top:502.8px;" width="20" height="20" viewBox="0 0 20 20" fill="none"><path d="M6.2 4.2H2V18.8H18V4.2H13.8" stroke="#5b93d3" stroke-width="1.2" fill="none"/><path d="M6.2 6.9V3.3H8.3C8.3 0.9 11.7 0.9 11.7 3.3H13.8V6.9Z" stroke="#5b93d3" stroke-width="1.2" fill="none" stroke-linejoin="round"/><path d="M5.8 10H14.2M5.8 12.5H14.2M5.8 15H11.2" stroke="#8ab4e4" stroke-width="1.3"/></svg>
<div class="t" style="left:722px;top:506.0px;line-height:18px;height:18px;color:#383838;white-space:nowrap;font-size:13.71px;font-weight:400;letter-spacing:-0.26px;">3.5 Recht &amp; Finanzen</div>
<svg style="left:1010.6px;top:503.1px;" width="19.4" height="19.4" viewBox="0 0 20 20" fill="none"><circle cx="10" cy="10" r="9" stroke="#2e2e2e" stroke-width="1.4"/><path d="M7.6 5.6V14.4L14.8 10Z" fill="#2e2e2e"/></svg>
<svg style="left:1439.5px;top:505.5px;" width="15" height="15" viewBox="0 0 15 15" fill="none"><rect x="0.6" y="0.6" width="13.8" height="13.8" fill="#fff" stroke="#dedede" stroke-width="1.2"/></svg>
<svg style="left:1756.5px;top:505.5px;" width="15" height="15" viewBox="0 0 15 15" fill="none"><rect x="0.6" y="0.6" width="13.8" height="13.8" fill="#fff" stroke="#dedede" stroke-width="1.2"/></svg>
<div style="left:648px;top:527px;width:1139px;height:30px;background:#e8eff8"></div>
<svg style="left:697.5px;top:531.8px;" width="20" height="20" viewBox="0 0 20 20" fill="none"><path d="M6.2 4.2H2V18.8H18V4.2H13.8" stroke="#5b93d3" stroke-width="1.2" fill="none"/><path d="M6.2 6.9V3.3H8.3C8.3 0.9 11.7 0.9 11.7 3.3H13.8V6.9Z" stroke="#5b93d3" stroke-width="1.2" fill="none" stroke-linejoin="round"/><path d="M5.8 10H14.2M5.8 12.5H14.2M5.8 15H11.2" stroke="#8ab4e4" stroke-width="1.3"/></svg>
<div class="t" style="left:722px;top:535.0px;line-height:18px;height:18px;color:#383838;white-space:nowrap;font-size:13.71px;font-weight:400;letter-spacing:0.03px;">3.6 IT &amp; Adminstration</div>
<svg style="left:1010.6px;top:532.1px;" width="19.4" height="19.4" viewBox="0 0 20 20" fill="none"><circle cx="10" cy="10" r="9" stroke="#2e2e2e" stroke-width="1.4"/><path d="M7.6 5.6V14.4L14.8 10Z" fill="#2e2e2e"/></svg>
<svg style="left:1439.5px;top:534.5px;" width="15" height="15" viewBox="0 0 15 15" fill="none"><rect x="0.6" y="0.6" width="13.8" height="13.8" fill="#eef3fa" stroke="#cdd5e2" stroke-width="1.2"/></svg>
<svg style="left:1756.5px;top:534.5px;" width="15" height="15" viewBox="0 0 15 15" fill="none"><rect x="0.6" y="0.6" width="13.8" height="13.8" fill="#eef3fa" stroke="#cdd5e2" stroke-width="1.2"/></svg>
<div style="left:648px;top:585px;width:1139px;height:1px;background:#e9e9e9"></div>
<svg style="left:659.0px;top:565.5px;" width="7" height="12" viewBox="0 0 7 12" fill="none"><path d="M1 1L6 6.0L1 11" stroke="#c4c4c4" stroke-width="1.2"/></svg>
<svg style="left:674.8px;top:561.5px;" width="19" height="19" viewBox="0 0 20 20" fill="none"><g opacity="1"><path d="M0.7 6.8V0.7H6.2V4.6H2.6" stroke="#e8873a" stroke-width="1.3"/><path d="M6.2 3.2H18.2V6.8" stroke="#e8873a" stroke-width="1.3"/><path d="M0.7 6.8H19.3L18 19.2H2Z" stroke="#e8873a" stroke-width="1.3" stroke-linejoin="round"/><path d="M5 10.8H15" stroke="#e8873a" stroke-width="1.3"/></g></svg>
<div class="t" style="left:698.5px;top:564.0px;line-height:18px;height:18px;color:#383838;white-space:nowrap;font-size:13.71px;font-weight:400;letter-spacing:-0.2px;">4 Marketing &amp; PR</div>
<svg style="left:1439.5px;top:563.5px;" width="15" height="15" viewBox="0 0 15 15" fill="none"><rect x="0.6" y="0.6" width="13.8" height="13.8" fill="#fff" stroke="#dedede" stroke-width="1.2"/></svg>
<svg style="left:1756.5px;top:563.5px;" width="15" height="15" viewBox="0 0 15 15" fill="none"><rect x="0.6" y="0.6" width="13.8" height="13.8" fill="#fff" stroke="#dedede" stroke-width="1.2"/></svg>
<div style="left:648px;top:586px;width:1139px;height:27px;background:#f9f9f9"></div>
<div style="left:648px;top:613px;width:1139px;height:1px;background:#e9e9e9"></div>
<svg style="left:674.8px;top:590.0px;" width="19" height="19" viewBox="0 0 20 20" fill="none"><g opacity="1"><path d="M0.7 6.8V0.7H6.2V4.6H2.6" stroke="#c6c6c6" stroke-width="1.3"/><path d="M6.2 3.2H18.2V6.8" stroke="#c6c6c6" stroke-width="1.3"/><path d="M0.7 6.8H19.3L18 19.2H2Z" stroke="#c6c6c6" stroke-width="1.3" stroke-linejoin="round"/><path d="M5 10.8H15" stroke="#c6c6c6" stroke-width="1.3"/></g></svg>
<svg style="left:1439.5px;top:592.0px;" width="15" height="15" viewBox="0 0 15 15" fill="none"><rect x="0.6" y="0.6" width="13.8" height="13.8" fill="#fcfcfc" stroke="#dedede" stroke-width="1.2"/><path d="M3.2 7.8L6.4 11.2L12.6 3.4" stroke="#dadada" stroke-width="1.5" fill="none"/></svg>
<svg style="left:1756.5px;top:592.0px;" width="15" height="15" viewBox="0 0 15 15" fill="none"><rect x="0.6" y="0.6" width="13.8" height="13.8" fill="#fcfcfc" stroke="#dedede" stroke-width="1.2"/><path d="M3.2 7.8L6.4 11.2L12.6 3.4" stroke="#dadada" stroke-width="1.5" fill="none"/></svg>
<div class="t" style="left:1051.3px;top:591.3px;line-height:18px;height:18px;color:#3a3a3a;white-space:nowrap;font-size:13.71px;font-weight:400;letter-spacing:-0.229px;">Bachmayr &amp; Co.</div>
<div class="t" style="left:1227.3px;top:591.3px;line-height:18px;height:18px;color:#3a3a3a;white-space:nowrap;font-size:13.71px;font-weight:400;letter-spacing:-0.357px;">Reunig Elena</div>
<div class="t" style="left:1497.5px;top:591.3px;line-height:18px;height:18px;color:#3a3a3a;white-space:nowrap;font-size:13.71px;font-weight:400;letter-spacing:-0.176px;">Müller Susanna, ...</div>
<div style="left:648px;top:641px;width:1139px;height:1px;background:#e9e9e9"></div>
<svg style="left:1439.5px;top:620.0px;" width="15" height="15" viewBox="0 0 15 15" fill="none"><rect x="0.6" y="0.6" width="13.8" height="13.8" fill="#fff" stroke="#dedede" stroke-width="1.2"/></svg>
<svg style="left:1756.5px;top:620.0px;" width="15" height="15" viewBox="0 0 15 15" fill="none"><rect x="0.6" y="0.6" width="13.8" height="13.8" fill="#fff" stroke="#dedede" stroke-width="1.2"/></svg>
<div class="t" style="left:1051.3px;top:619.3px;line-height:18px;height:18px;color:#3a3a3a;white-space:nowrap;font-size:13.71px;font-weight:400;letter-spacing:-0.229px;">Greengate Energy</div>
<div style="left:648px;top:642px;width:1139px;height:27px;background:#f9f9f9"></div>
<div style="left:648px;top:669px;width:1139px;height:1px;background:#e9e9e9"></div>
<svg style="left:1439.5px;top:648.0px;" width="15" height="15" viewBox="0 0 15 15" fill="none"><rect x="0.6" y="0.6" width="13.8" height="13.8" fill="#fcfcfc" stroke="#dedede" stroke-width="1.2"/></svg>
<svg style="left:1756.5px;top:648.0px;" width="15" height="15" viewBox="0 0 15 15" fill="none"><rect x="0.6" y="0.6" width="13.8" height="13.8" fill="#fcfcfc" stroke="#dedede" stroke-width="1.2"/><path d="M3.2 7.8L6.4 11.2L12.6 3.4" stroke="#dadada" stroke-width="1.5" fill="none"/></svg>
<div class="t" style="left:1051.3px;top:647.3px;line-height:18px;height:18px;color:#3a3a3a;white-space:nowrap;font-size:13.71px;font-weight:400;letter-spacing:-0.29px;">Saveurs Fleury</div>
<div style="left:648px;top:697px;width:1139px;height:1px;background:#e9e9e9"></div>
<svg style="left:1439.5px;top:676.0px;" width="15" height="15" viewBox="0 0 15 15" fill="none"><rect x="0.6" y="0.6" width="13.8" height="13.8" fill="#fff" stroke="#dedede" stroke-width="1.2"/><path d="M3.2 7.8L6.4 11.2L12.6 3.4" stroke="#dadada" stroke-width="1.5" fill="none"/></svg>
<svg style="left:1756.5px;top:676.0px;" width="15" height="15" viewBox="0 0 15 15" fill="none"><rect x="0.6" y="0.6" width="13.8" height="13.8" fill="#fff" stroke="#dedede" stroke-width="1.2"/><path d="M3.2 7.8L6.4 11.2L12.6 3.4" stroke="#dadada" stroke-width="1.5" fill="none"/></svg>
<div class="t" style="left:1051.3px;top:675.3px;line-height:18px;height:18px;color:#3a3a3a;white-space:nowrap;font-size:13.71px;font-weight:400;letter-spacing:-0.261px;">Johann Berger</div>
<div class="t" style="left:1227.3px;top:675.3px;line-height:18px;height:18px;color:#3a3a3a;white-space:nowrap;font-size:13.71px;font-weight:400;letter-spacing:-0.252px;">Kaiser Sebastian</div>
<div class="t" style="left:1497.5px;top:675.3px;line-height:18px;height:18px;color:#3a3a3a;white-space:nowrap;font-size:13.71px;font-weight:400;letter-spacing:-0.176px;">Müller Susanna, ...</div>
<div style="left:648px;top:698px;width:1139px;height:27px;background:#f9f9f9"></div>
<div style="left:648px;top:725px;width:1139px;height:1px;background:#e9e9e9"></div>
<svg style="left:1439.5px;top:704.0px;" width="15" height="15" viewBox="0 0 15 15" fill="none"><rect x="0.6" y="0.6" width="13.8" height="13.8" fill="#fcfcfc" stroke="#dedede" stroke-width="1.2"/></svg>
<svg style="left:1756.5px;top:704.0px;" width="15" height="15" viewBox="0 0 15 15" fill="none"><rect x="0.6" y="0.6" width="13.8" height="13.8" fill="#fcfcfc" stroke="#dedede" stroke-width="1.2"/><path d="M3.2 7.8L6.4 11.2L12.6 3.4" stroke="#dadada" stroke-width="1.5" fill="none"/></svg>
<div style="left:648px;top:753px;width:1139px;height:1px;background:#e9e9e9"></div>
<svg style="left:1439.5px;top:732.0px;" width="15" height="15" viewBox="0 0 15 15" fill="none"><rect x="0.6" y="0.6" width="13.8" height="13.8" fill="#fff" stroke="#dedede" stroke-width="1.2"/></svg>
<svg style="left:1756.5px;top:732.0px;" width="15" height="15" viewBox="0 0 15 15" fill="none"><rect x="0.6" y="0.6" width="13.8" height="13.8" fill="#fff" stroke="#dedede" stroke-width="1.2"/></svg>
<div style="left:648px;top:754px;width:1139px;height:28px;background:#f9f9f9"></div>
<div style="left:648px;top:782px;width:1139px;height:1px;background:#e9e9e9"></div>
<svg style="left:1439.5px;top:760.5px;" width="15" height="15" viewBox="0 0 15 15" fill="none"><rect x="0.6" y="0.6" width="13.8" height="13.8" fill="#fcfcfc" stroke="#dedede" stroke-width="1.2"/></svg>
<svg style="left:1756.5px;top:760.5px;" width="15" height="15" viewBox="0 0 15 15" fill="none"><rect x="0.6" y="0.6" width="13.8" height="13.8" fill="#fcfcfc" stroke="#dedede" stroke-width="1.2"/></svg>
<div style="left:1047px;top:212px;width:1px;height:743px;background:#c4c4c4"></div>
<div style="left:1048px;top:940px;width:739px;height:1px;background:#ececec"></div>
<div style="left:1052px;top:943.5px;width:210px;height:9px;background:#c1c1c1;border-radius:5px"></div>
<div style="left:1787px;top:212px;width:60px;height:750px;background:#f5f5f5"></div>
<svg style="left:1811.8px;top:223.5px;" width="19" height="19" viewBox="0 0 20 20" fill="none"><circle cx="10" cy="10" r="9" stroke="#b8b8b8" stroke-width="1.5"/><path d="M11.8 5L6.8 10L11.8 15" stroke="#b8b8b8" stroke-width="1.4"/></svg>
<div class="t" style="left:1821.5px;top:276px;transform:translate(-50%,-50%) rotate(90deg);color:#5a86c5;line-height:20px;font-size:16.88px;font-weight:400;letter-spacing:-0.094px;">Details</div>
<svg style="left:1789.0px;top:578.5px;" width="6" height="11" viewBox="0 0 6 11" fill="none"><path d="M5 1L1 5.5L5 10" stroke="#e6e6e6" stroke-width="1.2"/></svg>
<svg style="left:638.5px;top:536.0px;" width="6" height="11" viewBox="0 0 6 11" fill="none"><path d="M5 1L1 5.5L5 10" stroke="#e9e9e9" stroke-width="1.2"/></svg>
<div style="left:1810px;top:391px;width:40px;height:168px;background:#92afd9;border-radius:5px 0 0 5px"></div>
<div class="t" style="left:1829.5px;top:475px;transform:translate(-50%,-50%) rotate(-90deg);color:#fff;line-height:20px;-webkit-text-stroke:0.35px #fff;font-size:15.82px;font-weight:400;letter-spacing:-0.229px;">Sie brauchen Hilfe?</div>
<div style="left:1763.8px;top:874.2px;width:70.4px;height:70.4px;background:#2962d4;border-radius:50%"></div>
<svg style="left:1778px;top:890.3px;" width="42" height="40" viewBox="0 0 42 40" fill="none"><path d="M4.4 3.2H21.8C23 3.2 23.8 4 23.8 5.2V9.4H13.6C11.6 9.4 10.4 10.6 10.4 12.6V19.4H6.6L3 23V5.2C3 4 3.4 3.2 4.4 3.2Z" fill="#fff"/><path d="M15.4 11.6H36.4C37.6 11.6 38.4 12.4 38.4 13.6V34.4L34 30.2H15.4C14.2 30.2 13.4 29.4 13.4 28.2V13.6C13.4 12.4 14.2 11.6 15.4 11.6Z" fill="#fff"/><circle cx="21.4" cy="21" r="1.3" fill="#2962d4"/><circle cx="26" cy="21" r="1.3" fill="#2962d4"/><circle cx="30.6" cy="21" r="1.3" fill="#2962d4"/></svg>
<div style="left:606px;top:593px;width:352px;height:380px;background:#fff;box-shadow:0 4px 8px rgba(0,0,0,.27)"></div>
<svg style="left:939.9px;top:599.6px;" width="9.4" height="9.4" viewBox="0 0 9.4 9.4" fill="none"><path d="M0.6 0.6L8.8 8.8M8.8 0.6L0.6 8.8" stroke="#a4a4a4" stroke-width="1.3"/></svg>
<div style="left:614px;top:616px;width:335.5px;height:29px;background:#fff;border:1px solid #6e97d6;box-shadow:0 0 2px rgba(110,151,214,.6)"></div>
<div class="t" style="left:623.5px;top:621.0px;line-height:21px;height:21px;color:#bdbdbd;white-space:nowrap;font-size:15.82px;font-weight:400;letter-spacing:-0.367px;">Suchen</div>
<div style="left:622px;top:621px;width:1.6px;height:20.5px;background:#111"></div>
<div style="left:614px;top:658px;width:318.5px;height:257.5px;overflow:hidden"><div style="left:0px;top:0.0px;width:318.5px;height:28.15px;background:#fff;border-bottom:1px solid #ececec"></div><svg style="left:5.55px;top:5.95px;" width="15.5" height="15.5" viewBox="0 0 15.5 15.5" fill="none"><rect x="0.7" y="0.7" width="14.1" height="14.1" fill="#fff" stroke="#b2b2b2" stroke-width="1.4"/></svg><div class="t" style="left:32px;top:6.0px;line-height:18px;height:18px;color:#3a3a3a;white-space:nowrap;font-size:13.71px;font-weight:400;letter-spacing:0.019px;">Bezahlte Nichtleistungstätigkeit</div><div style="left:0px;top:28.15px;width:318.5px;height:28.15px;background:#f9f9f9;border-bottom:1px solid #ececec"></div><svg style="left:5.55px;top:34.1px;" width="15.5" height="15.5" viewBox="0 0 15.5 15.5" fill="none"><rect x="0.7" y="0.7" width="14.1" height="14.1" fill="#fff" stroke="#b2b2b2" stroke-width="1.4"/></svg><div class="t" style="left:32px;top:34.15px;line-height:18px;height:18px;color:#3a3a3a;white-space:nowrap;font-size:13.71px;font-weight:400;letter-spacing:-0.095px;">Beispielaufgabe</div><div style="left:0px;top:56.3px;width:318.5px;height:28.15px;background:#fff;border-bottom:1px solid #ececec"></div><svg style="left:5.55px;top:62.25px;" width="15.5" height="15.5" viewBox="0 0 15.5 15.5" fill="none"><rect x="0.7" y="0.7" width="14.1" height="14.1" fill="#fff" stroke="#b2b2b2" stroke-width="1.4"/></svg><div class="t" style="left:32px;top:62.3px;line-height:18px;height:18px;color:#3a3a3a;white-space:nowrap;font-size:13.71px;font-weight:400;letter-spacing:0.105px;">Programmierung</div><div style="left:0px;top:84.45px;width:318.5px;height:28.15px;background:#f9f9f9;border-bottom:1px solid #ececec"></div><svg style="left:5.55px;top:90.4px;" width="15.5" height="15.5" viewBox="0 0 15.5 15.5" fill="none"><rect x="0.7" y="0.7" width="14.1" height="14.1" fill="#fff" stroke="#b2b2b2" stroke-width="1.4"/></svg><div class="t" style="left:32px;top:90.45px;line-height:18px;height:18px;color:#3a3a3a;white-space:nowrap;font-size:13.71px;font-weight:400;letter-spacing:-0.234px;">Design</div><div style="left:0px;top:112.0px;width:318.5px;height:29.349999999999998px;background:#d2deee"></div><svg style="left:5.55px;top:118.55px;" width="15.5" height="15.5" viewBox="0 0 15.5 15.5" fill="none"><rect x="0.7" y="0.7" width="14.1" height="14.1" fill="#f1f5fa" stroke="#b2b2b2" stroke-width="1.4"/><path d="M3.2 7.8L6.4 11.2L12.6 3.4" stroke="#b4b4b4" stroke-width="1.5" fill="none"/></svg><div class="t" style="left:32px;top:118.6px;line-height:18px;height:18px;color:#3a3a3a;white-space:nowrap;font-size:13.71px;font-weight:400;letter-spacing:0.214px;">Administration</div><div style="left:0px;top:140.75px;width:318.5px;height:28.15px;background:#f9f9f9;border-bottom:1px solid #ececec"></div><svg style="left:5.55px;top:146.7px;" width="15.5" height="15.5" viewBox="0 0 15.5 15.5" fill="none"><rect x="0.7" y="0.7" width="14.1" height="14.1" fill="#fff" stroke="#b2b2b2" stroke-width="1.4"/></svg><div class="t" style="left:32px;top:146.75px;line-height:18px;height:18px;color:#3a3a3a;white-space:nowrap;font-size:13.71px;font-weight:400;letter-spacing:0.066px;">Projektmanagement</div><div style="left:0px;top:168.9px;width:318.5px;height:28.15px;background:#fff;border-bottom:1px solid #ececec"></div><svg style="left:5.55px;top:174.85px;" width="15.5" height="15.5" viewBox="0 0 15.5 15.5" fill="none"><rect x="0.7" y="0.7" width="14.1" height="14.1" fill="#fff" stroke="#b2b2b2" stroke-width="1.4"/></svg><div class="t" style="left:32px;top:174.9px;line-height:18px;height:18px;color:#3a3a3a;white-space:nowrap;font-size:13.71px;font-weight:400;letter-spacing:0.127px;">Marketing</div><div style="left:0px;top:197.05px;width:318.5px;height:28.15px;background:#f9f9f9;border-bottom:1px solid #ececec"></div><svg style="left:5.55px;top:203.0px;" width="15.5" height="15.5" viewBox="0 0 15.5 15.5" fill="none"><rect x="0.7" y="0.7" width="14.1" height="14.1" fill="#fff" stroke="#b2b2b2" stroke-width="1.4"/></svg><div class="t" style="left:32px;top:203.05px;line-height:18px;height:18px;color:#3a3a3a;white-space:nowrap;font-size:13.71px;font-weight:400;letter-spacing:-0.325px;">Recht</div><div style="left:0px;top:225.2px;width:318.5px;height:28.15px;background:#fff;border-bottom:1px solid #ececec"></div><svg style="left:5.55px;top:231.15px;" width="15.5" height="15.5" viewBox="0 0 15.5 15.5" fill="none"><rect x="0.7" y="0.7" width="14.1" height="14.1" fill="#fff" stroke="#b2b2b2" stroke-width="1.4"/></svg><div class="t" style="left:32px;top:231.2px;line-height:18px;height:18px;color:#3a3a3a;white-space:nowrap;font-size:13.71px;font-weight:400;letter-spacing:-0.242px;">Rechnungswesen</div><div style="left:0px;top:253.35px;width:318.5px;height:28.15px;background:#f9f9f9;border-bottom:1px solid #ececec"></div><svg style="left:5.55px;top:259.3px;" width="15.5" height="15.5" viewBox="0 0 15.5 15.5" fill="none"><rect x="0.7" y="0.7" width="14.1" height="14.1" fill="#fff" stroke="#b2b2b2" stroke-width="1.4"/></svg><div style="left:27.5px;top:0px;width:1px;height:300px;background:#ececec"></div></div>
<div style="left:932.5px;top:658px;width:17px;height:257.5px;background:#fafafa;border-left:1px solid #ececec"></div>
<div style="left:936.5px;top:660.5px;width:9.5px;height:143px;background:#bfbfbf;border-radius:5px"></div>
<div style="left:617px;top:921.5px;width:157px;height:27.5px;background:#f5f5f5;border:1px solid #d2d2d2;border-radius:3px"></div>
<div class="t" style="left:695.5px;top:924.9px;line-height:20px;height:20px;color:#666;white-space:nowrap;font-size:14.77px;font-weight:400;letter-spacing:-0.119px;transform:translateX(-50%);">Alle auswählen</div>
<div style="left:784px;top:921.5px;width:156px;height:27.5px;background:#f5f5f5;border:1px solid #d2d2d2;border-radius:3px"></div>
<div class="t" style="left:862px;top:924.9px;line-height:20px;height:20px;color:#666;white-space:nowrap;font-size:14.77px;font-weight:400;letter-spacing:-0.938px;transform:translateX(-50%);">OK</div>
<svg style="left:890px;top:774px;" width="50" height="50" viewBox="0 0 50 50" fill="none"><path d="M10 11.75V36.25L15.75 31.25L21.5 44L25 42.25L19.6 30L28.5 29.75Z" fill="#000" stroke="#fff" stroke-width="3.4" stroke-linejoin="miter" paint-order="stroke"/></svg>
</div></div>
</body></html>
